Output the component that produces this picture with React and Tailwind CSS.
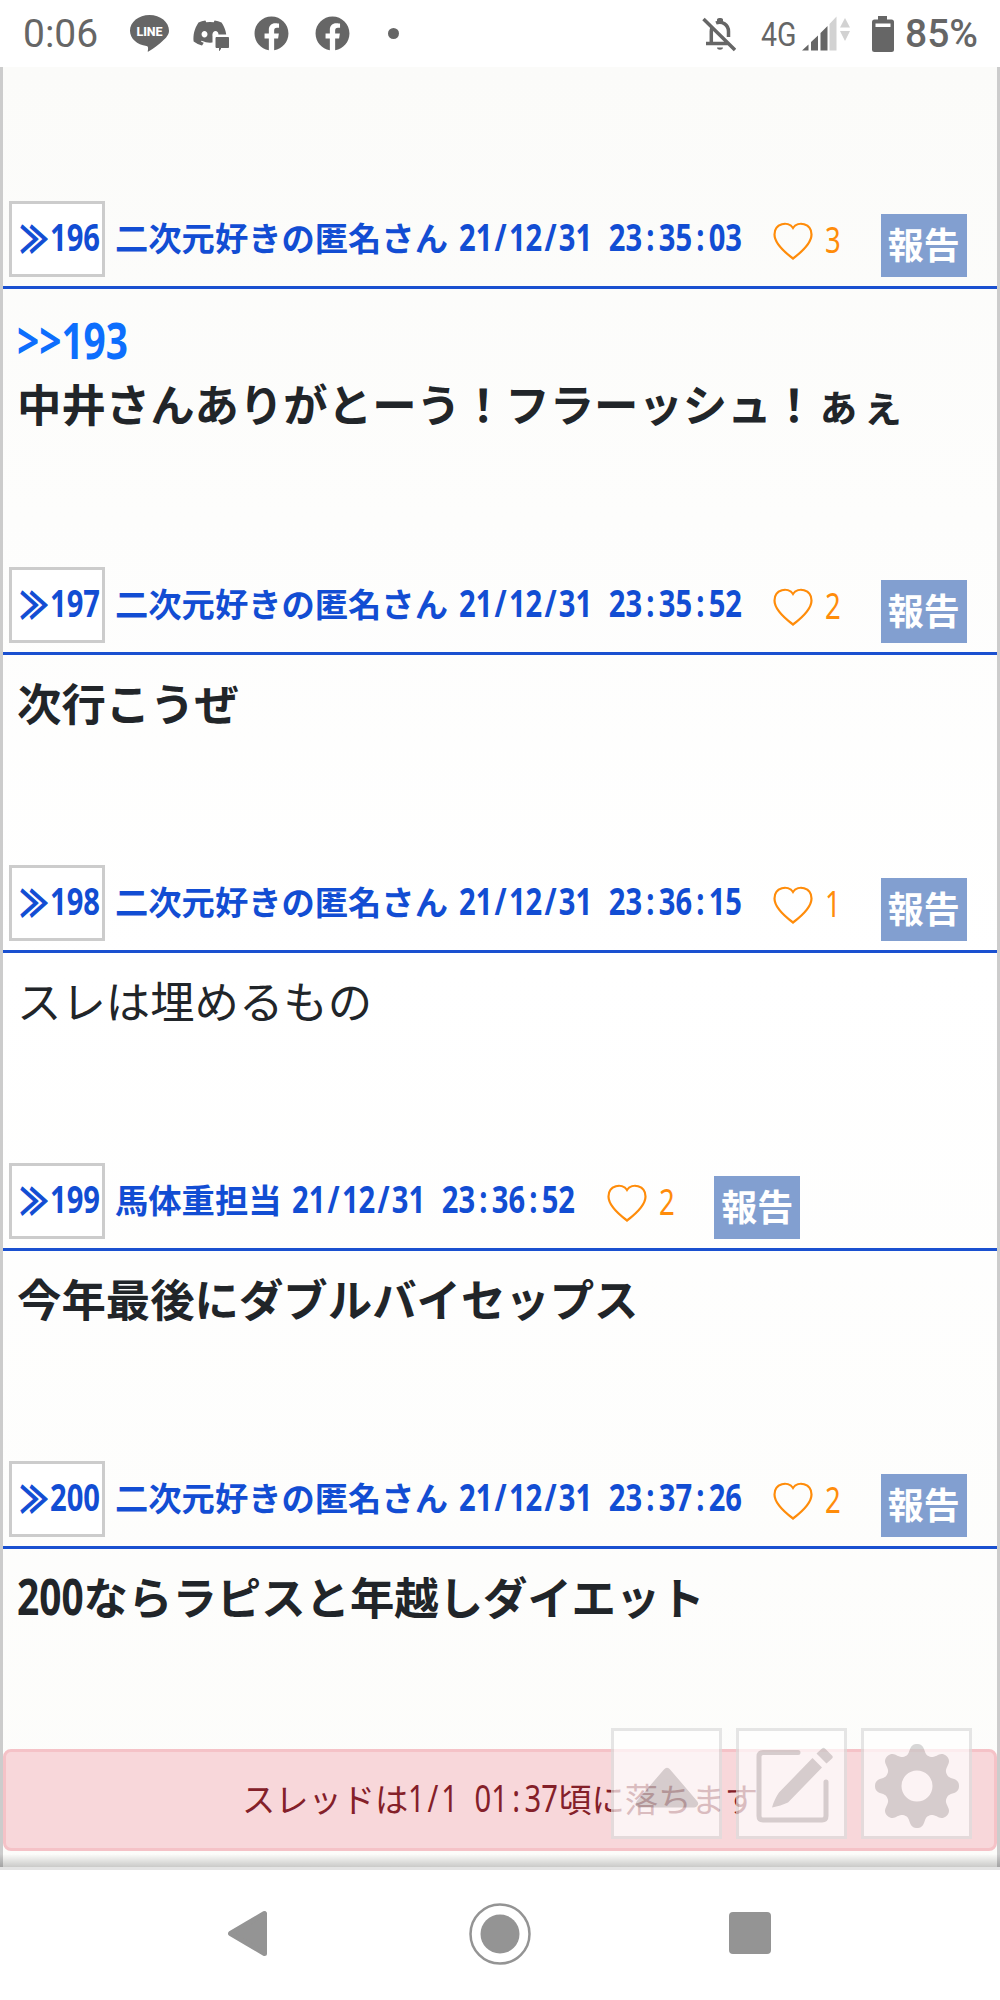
import React from "react";
import { FaFacebook, FaDiscord } from "react-icons/fa";

const posts = [
  {
    id: 196,
    name: "二次元好きの匿名さん",
    date: "21/12/31 23:35:03",
    likes: 3,
    reply: ">>193",
    text: "中井さんありがとーう！フラーッシュ！ぁぇ",
    bold: true,
    height: "h-[366px]",
  },
  {
    id: 197,
    name: "二次元好きの匿名さん",
    date: "21/12/31 23:35:52",
    likes: 2,
    text: "次行こうぜ",
    bold: true,
    height: "h-[298px]",
  },
  {
    id: 198,
    name: "二次元好きの匿名さん",
    date: "21/12/31 23:36:15",
    likes: 1,
    text: "スレは埋めるもの",
    bold: false,
    height: "h-[298px]",
  },
  {
    id: 199,
    name: "馬体重担当",
    date: "21/12/31 23:36:52",
    likes: 2,
    text: "今年最後にダブルバイセップス",
    bold: true,
    height: "h-[298px]",
  },
  {
    id: 200,
    name: "二次元好きの匿名さん",
    date: "21/12/31 23:37:26",
    likes: 2,
    lead: "200",
    text: "ならラピスと年越しダイエット",
    bold: true,
    height: "h-[288px]",
  },
];

// Half-width characters: every one takes exactly half an em of the Japanese text
function Half({ children }) {
  const parts = children.split(/([:/ ])/).filter(Boolean);
  return (
    <span
      className="inline-block whitespace-pre"
      style={{ width: `${children.length * 0.5}em` }}
    >
      <span className="inline-block origin-left scale-x-[0.771] text-[1.134em] font-['Noto_Sans','Noto_Sans_CJK_JP',sans-serif]">
        {parts.map((part, i) =>
          /[:/ ]/.test(part) ? (
            <span key={i} className="inline-block w-[1ch] text-center">
              {part}
            </span>
          ) : (
            part
          )
        )}
      </span>
    </span>
  );
}

function StatusBar() {
  return (
    <header className="flex h-[67px] items-center bg-white text-[#666]">
      <span className="ml-[23px] mt-[2px] w-[107px] font-[Roboto,sans-serif] text-[39px] leading-none">
        0:06
      </span>
      {/* LINE */}
      <svg width="39" height="37" viewBox="0 0 39 37" className="-mt-px shrink-0">
        <path
          d="M19.5 0C8.700 0 0 7 0 15.700C0 23.500 7 29.800 16.500 31C18.500 31.500 18.200 33 17.700 36.600C18 37.300 26 32 32 26.500C36.500 22.500 39 19.500 39 15.700C39 7 30.300 0 19.500 0Z"
          fill="#666"
        />
        <text
          x="19.500"
          y="21"
          textAnchor="middle"
          textLength="26"
          fontSize="12.500"
          fontWeight="800"
          fontFamily="Roboto, sans-serif"
          fill="#fff"
        >
          LINE
        </text>
      </svg>
      {/* Discord with the message bubble */}
      <span className="relative ml-[23px] h-[35px] w-[38px]">
        <FaDiscord className="-mt-[1px] size-[36px]" />
        <svg width="19" height="19" viewBox="0 0 19 19" className="absolute right-0 bottom-[-1px]">
          <path d="M1.500 1.500H19V19H1.500Z" fill="#fff" />
          <path d="M5 4.500H17.500V14.500H10L8.500 17.500V14.500H5Z" fill="#666" stroke="#666" strokeLinejoin="round" />
        </svg>
      </span>
      <FaFacebook className="ml-[24px] size-[35px]" />
      <FaFacebook className="ml-[26px] size-[35px]" />
      <span className="ml-[38px] size-[11px] rounded-full bg-[#666]" />

      <div className="ml-auto flex items-center">
        <svg width="34" height="36" viewBox="0 0 34 36" fill="none" stroke="#666" strokeWidth="3.500">
          <path d="M1.500 3L33 34M4 27.500H27M9.300 27V15.500C9.300 13.500 9.800 12 10.500 10.500M14 7C20 4.500 26.500 8.500 26.500 15.500V21" />
          <path d="M15 6V3.500C15 1.500 21 1.500 21 3.500V6ZM15 31.500H21C21 34.500 15 34.500 15 31.500Z" fill="#666" stroke="none" />
        </svg>
        <span className="ml-[25px] w-[41px] font-[Roboto,sans-serif] text-[34px] leading-none">
          <span className="inline-block origin-left scale-x-[0.84]">4G</span>
        </span>
        <svg width="49" height="35" viewBox="0 0 49 35">
          <path d="M0 34.500L6.500 28.500V34.500ZM9 26L16 19.500V34.500H9ZM18.500 17L25.500 10V34.500H18.500Z" fill="#666" />
          <path d="M27.500 8L34.500 0.500V34.500H27.500ZM38 11.500L43 2L48 11.500ZM38 15H48L43 25Z" fill="#d2d2d2" />
        </svg>
        <svg width="22" height="36" viewBox="0 0 22 36" className="ml-[21px]">
          <path d="M6 0H15V4H6Z" fill="#666" />
          <rect y="3.500" width="22" height="32.500" rx="2.500" fill="#666" />
          <rect x="3.500" y="7.500" width="15" height="3.500" fill="#fff" />
        </svg>
        <span className="ml-[11px] mt-[2px] w-[95px] font-[Roboto,sans-serif] text-[39px] font-medium leading-none">
          85%
        </span>
      </div>
    </header>
  );
}

function Post({ post }) {
  return (
    <article className={post.height}>
      <div className="flex h-[88px] items-start border-b-[3px] border-[#1a50d0] pl-[6px] text-[33.3px] font-bold leading-[72px] text-[#124dd3]">
        <div className="flex h-[76px] w-[96px] shrink-0 border-[3px] border-[#ccc] bg-white pl-[9px] leading-[66px]">
          <span className="w-[29px]">
            <span className="inline-block origin-left -translate-x-px scale-x-[0.78] text-[36px] [-webkit-text-stroke:1.2px_#124dd3]">
              ≫
            </span>
          </span>
          <Half>{String(post.id)}</Half>
        </div>
        <span className="ml-[10px] whitespace-nowrap">{post.name}</span>
        <span className="ml-[11px]">
          <Half>{post.date}</Half>
        </span>
        <svg width="40" height="38" viewBox="0 0 40 38" className="ml-[31px] mt-[21px] shrink-0">
          <path
            d="M20 36.500C12 30.500 1.500 22 1.500 12.500C1.500 1.500 15 -1.500 20 6C25 -1.500 38.500 1.500 38.500 12.500C38.500 22 28 30.500 20 36.500Z"
            fill="none"
            stroke="#ff8c0a"
            strokeWidth="2.200"
          />
        </svg>
        <span className="ml-[12px] mt-[2px] text-[31.500px] font-normal text-[#ff8c0a]">
          <Half>{String(post.likes)}</Half>
        </span>
        <span className="ml-[40px] mt-[13px] h-[63px] w-[86px] shrink-0 bg-[#829fd0] text-center text-[36px] leading-[58px] text-white">
          報告
        </span>
      </div>
      <div
        className={`pl-[14px] pt-[14px] text-[44.4px] leading-[66.500px] text-[#212529] ${
          post.bold ? "font-bold" : "font-normal"
        }`}
      >
        {post.reply && (
          <div className="h-[67px] pt-[4px] text-[#0d6efd]">
            <Half>{post.reply}</Half>
          </div>
        )}
        <div className="whitespace-nowrap">
          {post.lead && <Half>{post.lead}</Half>}
          {post.text}
        </div>
      </div>
    </article>
  );
}

// Outline of the settings gear: eight rounded teeth
const gearPoints = Array.from({ length: 240 }, (_, i) => {
  const a = (i * Math.PI) / 120;
  const r = 37 + 5 * (Math.tanh(1.3 * Math.cos(8 * a)) / Math.tanh(1.3));
  return `${(42 + r * Math.cos(a)).toFixed(2)},${(42 + r * Math.sin(a)).toFixed(2)}`;
}).join("L");

function FloatingButtons() {
  const box =
    "flex size-[111px] items-center justify-center border-[3px] border-[#dcdcdc] bg-white opacity-70";
  return (
    <div className="absolute right-[25px] bottom-[28px] flex gap-[14px]">
      <button className={box}>
        <svg width="64" height="42" viewBox="0 0 64 42" className="mt-[8px]">
          <path d="M32 5L59 36.500H5Z" fill="#c8c8c8" stroke="#c8c8c8" strokeWidth="8" strokeLinejoin="round" />
        </svg>
      </button>
      <button className={box}>
        <svg width="80" height="78" viewBox="0 0 80 78" className="mt-[1px] ml-[4px]">
          <path
            d="M44 7.500H9Q5 7.500 5 11.500V71Q5 75 9 75H68Q72 75 72 71V37"
            fill="none"
            stroke="#c8c8c8"
            strokeWidth="5"
            strokeLinecap="round"
          />
          <path
            d="M18 62.500C19.500 57 22.500 51 25 47.500L58.500 13L68 22.500L34 57.500C29 59.500 24 61.500 18 62.500ZM62.500 8.500L68 3.500Q69.500 2 71 3.500L78 10.500Q79.500 12 78 13.500L72.500 18.500Z"
            fill="#c8c8c8"
          />
        </svg>
      </button>
      <button className={box}>
        <svg width="84" height="84" viewBox="0 0 84 84" className="mt-[5px]">
          <path
            d={`M${gearPoints}ZM57.500,42A15.500,15.500 0 1 0 26.500,42A15.500,15.500 0 1 0 57.500,42Z`}
            fill="#c8c8c8"
            fillRule="evenodd"
          />
        </svg>
      </button>
    </div>
  );
}

function NavBar() {
  return (
    <nav className="flex h-[130px] items-start bg-white pt-[33px]">
      <svg width="39" height="61" viewBox="0 0 39 61" className="ml-[228px]">
        <path d="M2.500 30.500L36.500 10.500V50.500Z" fill="#949494" stroke="#949494" strokeWidth="5" strokeLinejoin="round" />
      </svg>
      <svg width="62" height="62" viewBox="0 0 62 62" className="ml-[202px]">
        <circle cx="31" cy="31" r="29.500" fill="none" stroke="#949494" strokeWidth="2.500" />
        <circle cx="31" cy="31" r="19.500" fill="#949494" />
      </svg>
      <span className="mt-[9px] ml-[198px] size-[42px] rounded-[4px] bg-[#949494]" />
    </nav>
  );
}

function App() {
  return (
    <div className="h-[2000px] w-[1000px] overflow-hidden bg-white font-['Noto_Sans_CJK_JP',sans-serif]">
      <StatusBar />
      <main className="relative h-[1800px] border-x-[3px] border-[#ccc] bg-linear-to-b from-[#fbfbf9] via-white to-[#fcfcfa] pt-[134px]">
        {posts.map((post) => (
          <Post key={post.id} post={post} />
        ))}
        <div className="h-[102px] rounded-[8px] border-[3px] border-[#f5c2c7] bg-[#f8d7da] text-center text-[33.3px] leading-[92px] text-[#842029]">
          スレッドは<Half>1/1 01:37</Half>頃に落ちます
        </div>
        <div className="absolute inset-x-[-3px] bottom-0 h-[13px] bg-linear-to-b from-transparent to-black/20" />
        <FloatingButtons />
      </main>
      <div className="h-[3px] bg-[#e4e4e4]" />
      <NavBar />
    </div>
  );
}

export default App;
